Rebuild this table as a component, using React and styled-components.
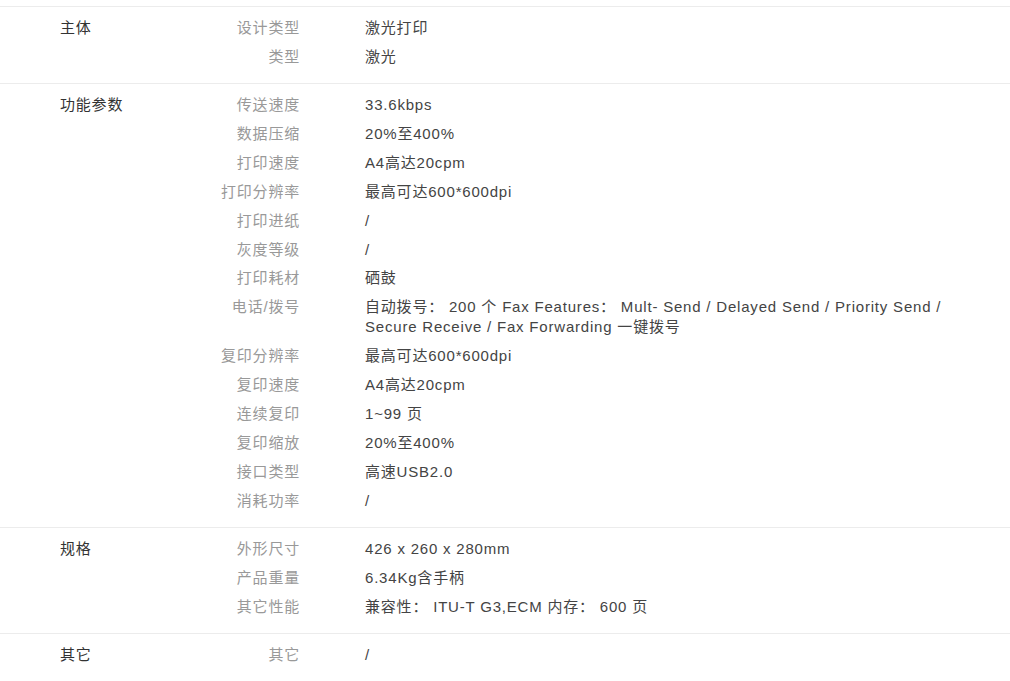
import styled, { createGlobalStyle } from 'styled-components';

const GlobalStyle = createGlobalStyle`
    body {
        margin: 0;
        background: #fff;
        font-family: "Liberation Sans", "Noto Sans CJK SC", sans-serif;
    }
`;

const specs = [
    {
        group: '主体',
        items: [
            ['设计类型', '激光打印'],
            ['类型', '激光'],
        ],
    },
    {
        group: '功能参数',
        items: [
            ['传送速度', '33.6kbps'],
            ['数据压缩', '20%至400%'],
            ['打印速度', 'A4高达20cpm'],
            ['打印分辨率', '最高可达600*600dpi'],
            ['打印进纸', '/'],
            ['灰度等级', '/'],
            ['打印耗材', '硒鼓'],
            ['电话/拨号', '自动拨号： 200 个 Fax Features： Mult- Send / Delayed Send / Priority Send / Secure Receive / Fax Forwarding 一键拨号'],
            ['复印分辨率', '最高可达600*600dpi'],
            ['复印速度', 'A4高达20cpm'],
            ['连续复印', '1~99 页'],
            ['复印缩放', '20%至400%'],
            ['接口类型', '高速USB2.0'],
            ['消耗功率', '/'],
        ],
    },
    {
        group: '规格',
        items: [
            ['外形尺寸', '426 x 260 x 280mm'],
            ['产品重量', '6.34Kg含手柄'],
            ['其它性能', '兼容性： ITU-T G3,ECM 内存： 600 页'],
        ],
    },
    {
        group: '其它',
        items: [['其它', '/']],
    },
];

const SpecTable = styled.div`
    margin-top: 6px;
    font-size: 15px;
    letter-spacing: 0.8px;
    line-height: 20px;
`;

const Section = styled.section`
    display: flex;
    border-top: 1px solid #ececec;
    padding: 11px 0 7px 60px;
`;

const GroupName = styled.div`
    width: 140px;
    flex-shrink: 0;
    color: #333;
`;

const ItemList = styled.div`
    display: flex;
    flex-direction: column;
    gap: 8.93px;
    margin-bottom: 9px;
`;

const Item = styled.div`
    display: flex;
    gap: 65px;
`;

const Label = styled.div`
    width: 100px;
    flex-shrink: 0;
    text-align: right;
    color: #999;
`;

const Value = styled.div`
    width: 600px;
    color: #444;
`;

export default function App() {
    return (
        <>
            <GlobalStyle />
            <SpecTable>
                {specs.map(section => (
                    <Section key={section.group}>
                        <GroupName>{section.group}</GroupName>
                        <ItemList>
                            {section.items.map(([label, value]) => (
                                <Item key={label}>
                                    <Label>{label}</Label>
                                    <Value>{value}</Value>
                                </Item>
                            ))}
                        </ItemList>
                    </Section>
                ))}
            </SpecTable>
        </>
    );
}
